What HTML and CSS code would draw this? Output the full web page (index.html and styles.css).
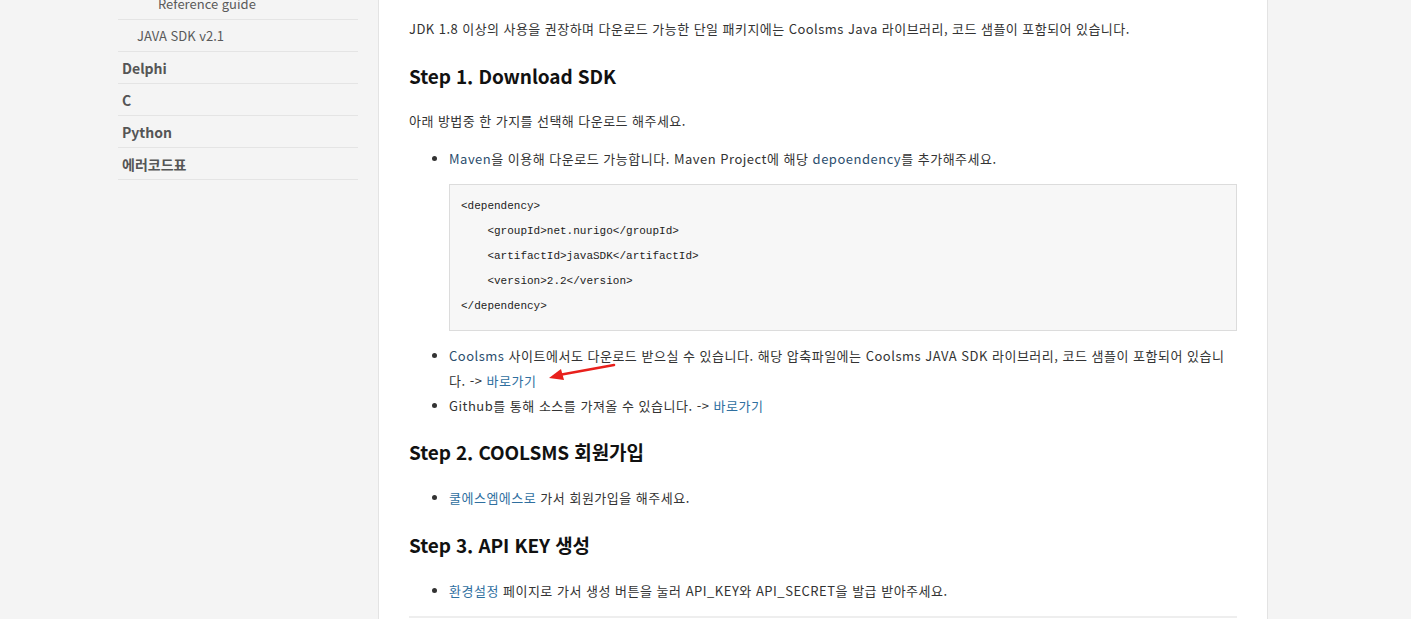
FILE: index.html
```html
<!DOCTYPE html>
<html lang="ko">
<head>
<meta charset="utf-8">
<title>Coolsms Java SDK</title>
<link rel="stylesheet" href="styles.css">
</head>
<body>
<div class="page">
  <aside class="sidebar">
    <ul class="nav">
      <li class="nav-item lvl3">Reference guide</li>
      <li class="nav-item lvl2">JAVA SDK v2.1</li>
      <li class="nav-item lvl1">Delphi</li>
      <li class="nav-item lvl1">C</li>
      <li class="nav-item lvl1">Python</li>
      <li class="nav-item lvl1">에러코드표</li>
    </ul>
  </aside>
  <main class="content">
    <p class="intro">JDK 1.8 이상의 사용을 권장하며 다운로드 가능한 단일 패키지에는 Coolsms Java 라이브러리, 코드 샘플이 포함되어 있습니다.</p>
    <h2>Step 1. Download SDK</h2>
    <p>아래 방법중 한 가지를 선택해 다운로드 해주세요.</p>
    <ul class="list">
      <li><a class="ref">Maven</a>을 이용해 다운로드 가능합니다. Maven Project에 해당 <a class="ref">depoendency</a>를 추가해주세요.
<pre class="code">&lt;dependency&gt;
    &lt;groupId&gt;net.nurigo&lt;/groupId&gt;
    &lt;artifactId&gt;javaSDK&lt;/artifactId&gt;
    &lt;version&gt;2.2&lt;/version&gt;
&lt;/dependency&gt;</pre>
      </li>
      <li class="arrow-host"><a class="ref">Coolsms</a> 사이트에서도 다운로드 받으실 수 있습니다. 해당 압축파일에는 Coolsms JAVA SDK 라이브러리, 코드 샘플이 포함되어 있습니다. -&gt; <a class="link">바로가기</a>
        <svg class="arrow" width="80" height="30" viewBox="0 0 80 30">
          <line x1="69" y1="7" x2="14" y2="17" stroke="#e8201c" stroke-width="2.6" stroke-linecap="round"/>
          <polygon points="4,20 16,11 19,22" fill="#e8201c"/>
        </svg>
      </li>
      <li>Github를 통해 소스를 가져올 수 있습니다. -&gt; <a class="link">바로가기</a></li>
    </ul>
    <h2 class="h-tight">Step 2. COOLSMS 회원가입</h2>
    <ul class="list">
      <li><a class="link">쿨에스엠에스로</a> 가서 회원가입을 해주세요.</li>
    </ul>
    <h2>Step 3. API KEY 생성</h2>
    <ul class="list">
      <li><a class="link">환경설정</a> 페이지로 가서 생성 버튼을 눌러 API_KEY와 API_SECRET을 발급 받아주세요.</li>
    </ul>
    <hr class="rule">
  </main>
</div>
</body>
</html>
```
FILE: styles.css
```css
html, body {
  margin: 0;
  padding: 0;
  background: #f4f4f4;
  height: 100%;
  overflow: hidden;
}
body {
  font-family: "Noto Sans CJK KR", "Noto Sans", sans-serif;
  font-size: 13px;
  color: #333;
}
.page {
  display: flex;
  align-items: stretch;
  min-height: 619px;
}
.sidebar {
  width: 240px;
  padding-left: 118px;
  padding-right: 20px;
  flex: none;
}
.nav {
  list-style: none;
  margin: -12px 0 0;
  padding: 0;
}
.nav-item {
  height: 31px;
  line-height: 31px;
  border-bottom: 1px solid #e4e4e4;
  color: #5a5a5a;
  white-space: nowrap;
}
.lvl3 { padding-left: 40px; font-size: 13px; }
.lvl2 { padding-left: 19px; font-size: 13px; }
.lvl1 { padding-left: 4px; font-size: 14px; font-weight: bold; color: #555; padding-top: 1px; height: 30px; }

.content {
  width: 828px;
  flex: none;
  background: #fff;
  border-left: 1px solid #e3e3e3;
  border-right: 1px solid #e3e3e3;
  padding: 16px 30px 0;
}
.content p {
  margin: 0 0 13px;
  line-height: 25px;
  letter-spacing: 0.45px;
}
.content p.intro { margin: 0 0 1px; }
.content h2 {
  margin: 20px 0 17px;
  font-size: 19px;
  line-height: 30px;
  font-weight: bold;
  color: #111;
  letter-spacing: -0.1px;
}
.content h2.h-tight { margin-top: 19px; }
.list {
  margin: 0;
  padding-left: 40px;
}
h2 + .list { padding-top: 1px; }
.list li {
  line-height: 25px;
  letter-spacing: 0.5px;
}
.ref { color: #2b4e6e; }
.link { color: #2f6f9f; }
.code {
  margin: 13px 0 12px;
  padding: 9px 11px 11px;
  background: #f7f7f7;
  border: 1px solid #dcdcdc;
  font-family: "Liberation Mono", monospace;
  font-size: 11px;
  line-height: 25px;
  color: #222;
  letter-spacing: 0;
}
.arrow-host { position: relative; }
.arrow {
  position: absolute;
  left: 96px;
  top: 15px;
}
.rule {
  margin: 13px 0 0;
  border: 0;
  border-top: 2px solid #eeeeee;
}
```
